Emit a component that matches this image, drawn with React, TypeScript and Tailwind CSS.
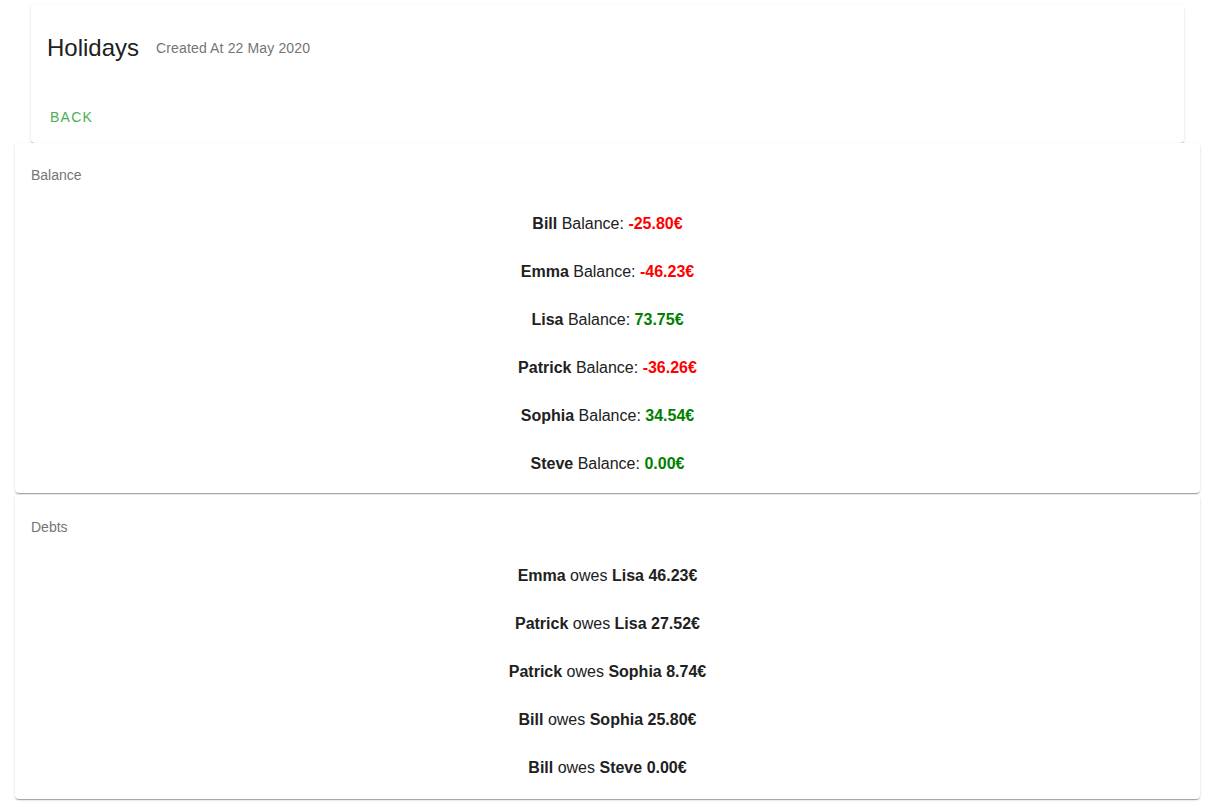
const balances = [
  { name: "Bill", amount: -25.8 },
  { name: "Emma", amount: -46.23 },
  { name: "Lisa", amount: 73.75 },
  { name: "Patrick", amount: -36.26 },
  { name: "Sophia", amount: 34.54 },
  { name: "Steve", amount: 0 },
];

const debts = [
  { from: "Emma", to: "Lisa", amount: 46.23 },
  { from: "Patrick", to: "Lisa", amount: 27.52 },
  { from: "Patrick", to: "Sophia", amount: 8.74 },
  { from: "Bill", to: "Sophia", amount: 25.8 },
  { from: "Bill", to: "Steve", amount: 0 },
];

const cardShadow =
  "shadow-[0_2px_1px_-1px_rgba(0,0,0,0.2),0_1px_1px_0_rgba(0,0,0,0.14),0_1px_3px_0_rgba(0,0,0,0.12)]";

function Section({ title, children, last }: { title: string; children: React.ReactNode; last?: boolean }) {
  return (
    <div className={`ml-[15px] w-[1185px] rounded bg-white ${cardShadow} pt-[22px] ${last ? "pb-[7px]" : "pb-[5px]"}`}>
      <div className="px-4 text-sm leading-5 text-[#757575]">{title}</div>
      <div className="mt-[15px] flex flex-col text-base text-[#212121]">
        {children}
      </div>
    </div>
  );
}

export default function App() {
  return (
    <div className="min-h-screen bg-white pt-[5px] pb-4 font-['Liberation_Sans',Arial,sans-serif]">
      <div className={`ml-[31px] w-[1153px] rounded bg-white ${cardShadow}`}>
        <div className="flex items-center gap-[17px] pl-4 pt-[27px]">
          <h1 className="text-2xl leading-8 text-[#212121]">Holidays</h1>
          <span className="text-sm tracking-[0.01em] text-[#757575]">Created At 22 May 2020</span>
        </div>
        <div className="px-2 pt-[35px] pb-2">
          <button className="h-9 rounded pl-[11px] pr-2 text-sm uppercase tracking-[0.09em] text-[#4caf50] hover:bg-green-50">
            Back
          </button>
        </div>
      </div>

      <Section title="Balance">
        {balances.map((b) => (
          <div key={b.name} className="flex h-12 items-center justify-center">
            <span>
              <b>{b.name}</b> Balance:{" "}
              <b className={b.amount < 0 ? "text-[#ff0000]" : "text-[#008000]"}>{b.amount.toFixed(2)}€</b>
            </span>
          </div>
        ))}
      </Section>

      <div className="h-[2px]" />

      <Section title="Debts" last>
        {debts.map((d, i) => (
          <div key={i} className="flex h-12 items-center justify-center">
            <span>
              <b>{d.from}</b> owes <b>{d.to}</b> <b>{d.amount.toFixed(2)}€</b>
            </span>
          </div>
        ))}
      </Section>
    </div>
  );
}
